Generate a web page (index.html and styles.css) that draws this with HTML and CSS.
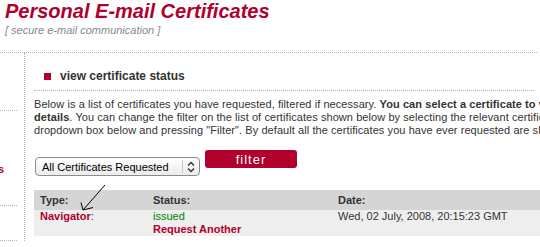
FILE: index.html
```html
<!DOCTYPE html>
<html lang="en">
<head>
  <meta charset="UTF-8">
  <title>Personal E-mail Certificates</title>
  <link rel="stylesheet" href="styles.css">
</head>
<body>
<div class="page">
  <div class="masthead">
    <h1>Personal E-mail Certificates</h1>
    <p class="tagline">[ secure e-mail communication ]</p>
  </div>

  <div class="layout">
    <div class="sidebar">
      <div class="side-item first"></div>
      <div class="side-item second"><a href="#">Certificates</a></div>
      <div class="side-item third"></div>
    </div>

    <div class="content">
      <div class="section-head">
        <span class="bullet"></span>
        <h2>view certificate status</h2>
      </div>

      <p class="intro">Below is a list of certificates you have requested, filtered if necessary. <b>You can select a certificate to view its details</b>. You can change the filter on the list of certificates shown below by selecting the relevant certificate in the dropdown box below and pressing "Filter". By default all the certificates you have ever requested are shown.</p>

      <form class="filter" onsubmit="return false">
        <span class="select-wrap">
          <select>
            <option>All Certificates Requested</option>
            <option>Issued Certificates</option>
            <option>Pending Certificates</option>
          </select>
          <span class="select-arrows">
            <svg width="8" height="12" viewBox="0 0 8 12"><path d="M1 4.5L4 1.5L7 4.5M1 7.5L4 10.5L7 7.5" fill="none" stroke="#333" stroke-width="1.4"/></svg>
          </span>
        </span>
        <button class="filter-btn">filter</button>
      </form>

      <table class="certs">
        <thead>
          <tr>
            <th class="col-type">Type:</th>
            <th class="col-status">Status:</th>
            <th>Date:</th>
          </tr>
        </thead>
        <tbody>
          <tr>
            <td><a href="#" class="cert-link">Navigator</a>:</td>
            <td><span class="issued">issued</span><br><a href="#" class="cert-link">Request Another</a></td>
            <td>Wed, 02 July, 2008, 20:15:23 GMT</td>
          </tr>
        </tbody>
      </table>
    </div>
  </div>

  <svg class="pointer" width="30" height="32" viewBox="0 0 30 32">
    <path d="M28 1L6 26M4 18.5L6 26L16 23.5" fill="none" stroke="#000" stroke-width="1"/>
  </svg>
</div>
</body>
</html>
```

FILE: styles.css
```css
html, body { overflow: hidden; }
body { margin: 0; font-family: "Liberation Sans", Arial, sans-serif; color: #333; background: #fff; }
.page { position: relative; width: 640px; }

.masthead { width: 532px; padding: 0 0 15px 5px; border-bottom: 1px dotted #b3b3b3; }
.masthead h1 { margin: 0; font-size: 20px; line-height: 22px; font-style: italic; font-weight: bold; color: #b0002b; }
.tagline { margin: 2px 0 0; font-size: 11px; line-height: 13px; font-style: italic; color: #888; }

.layout { display: flex; }
.sidebar { width: 24px; border-right: 1px dotted #b3b3b3; overflow: hidden; }
.side-item { width: 4px; padding-right: 13px; border-bottom: 1px dotted #b3b3b3; display: flex; justify-content: flex-end; }
.side-item.first { height: 57px; }
.side-item.second { height: 42px; padding-top: 52px; }
.side-item.third { height: 34px; }
.side-item a { flex-shrink: 0; white-space: nowrap; font-size: 11px; line-height: 13px; font-weight: bold; color: #b0002b; text-decoration: none; }

.content { padding-left: 9px; width: 600px; }

.section-head { display: flex; align-items: center; gap: 9px; width: 490px; padding: 16px 0 6px 10px; border-bottom: 1px dotted #b3b3b3; }
.bullet { width: 7px; height: 7px; background: #b0002b; }
.section-head h2 { margin: 0; font-size: 12px; line-height: 15px; color: #333; }

.intro { margin: 7px 0 0; width: 570px; font-size: 11px; line-height: 13px; letter-spacing: 0.07px; color: #333; }
.intro b { color: #333; }

.filter { display: flex; align-items: flex-start; gap: 5px; margin: 13px 0 0 1px; }
.select-wrap { position: relative; margin-top: 7px; }
.select-wrap select { appearance: none; -webkit-appearance: none; display: block; width: 165px; height: 19px; margin: 0; padding: 0 0 0 6px; border: 1px solid #8c8c8c; border-radius: 4px; background: linear-gradient(#ffffff, #ececec); font: 11px "Liberation Sans", Arial, sans-serif; color: #000; }
.select-arrows { position: absolute; top: 3px; right: 1px; width: 16px; height: 13px; border-left: 1px solid #c8c8c8; display: flex; align-items: center; justify-content: center; pointer-events: none; }
.filter-btn { width: 92px; height: 18px; margin-top: 0; padding: 0; border: 0; border-radius: 3px; background: #b0002b; color: #fff; font: 13px "Liberation Sans", Arial, sans-serif; letter-spacing: 1px; }

.certs { margin-top: 14px; width: 580px; border-collapse: collapse; font-size: 11px; line-height: 13px; }
.certs th { height: 20px; padding: 0 6px; background: #d5d5d5; text-align: left; color: #333; }
.certs td { padding: 0 6px 0; height: 26px; background: #eee; vertical-align: top; color: #333; }
.col-type { width: 101px; }
.col-status { width: 173px; }
.cert-link { color: #b0002b; font-weight: bold; text-decoration: none; }
.status-link { letter-spacing: 0.3px; }
.issued { color: #008000; }

.pointer { position: absolute; left: 77px; top: 184px; }
```
